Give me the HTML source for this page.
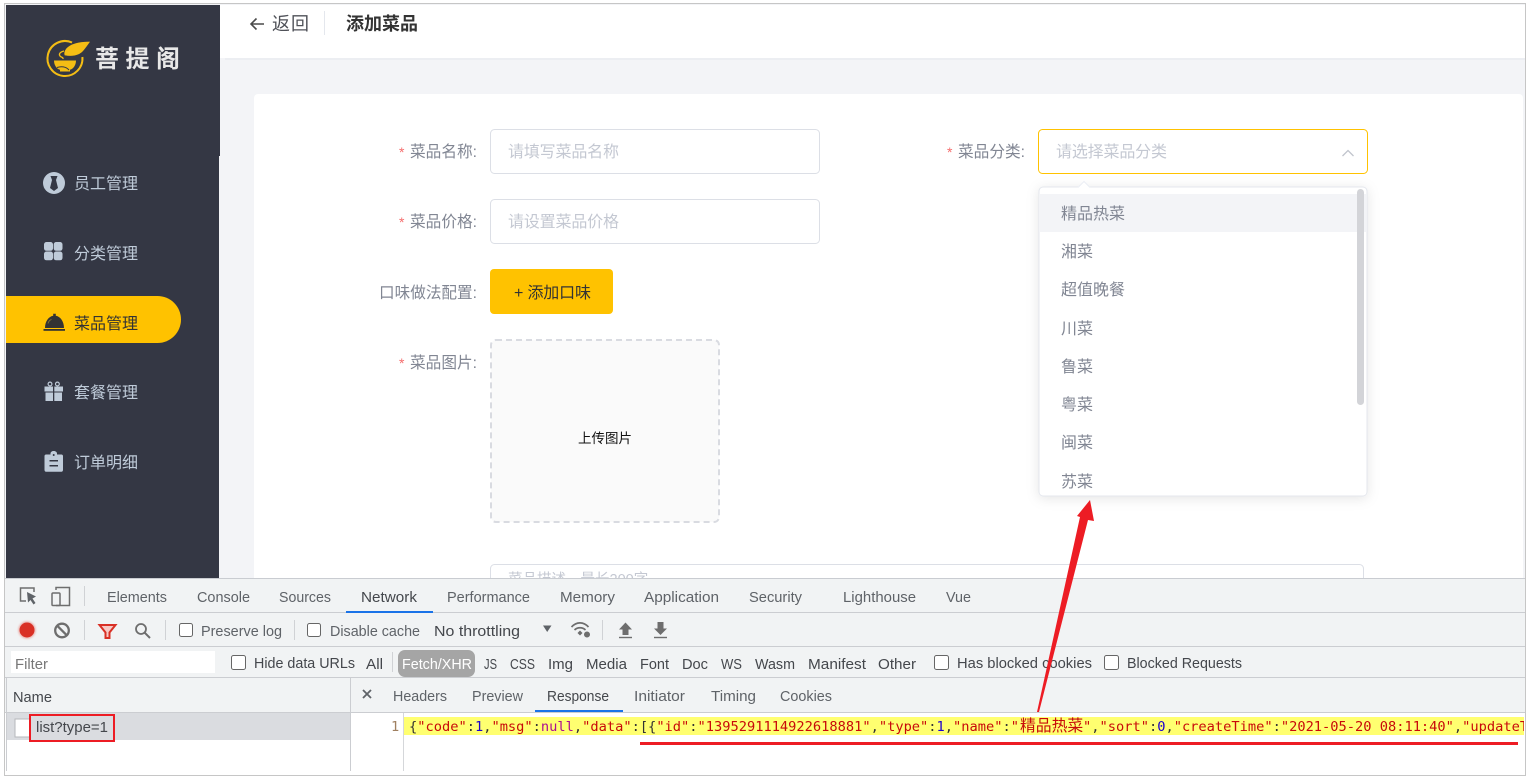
<!DOCTYPE html>
<html><head><meta charset="utf-8"><style>
html,body{margin:0;padding:0;background:#fff;width:1531px;height:782px;overflow:hidden}
svg{display:block}
text{font-family:"Liberation Sans","Noto Sans CJK SC",sans-serif;white-space:pre}
.cn{font-size:16px;fill:#818693}
.m{font-size:16px;fill:#bfcbd9}
.dt{font-size:14.5px;fill:#5f6368}
.dk{font-size:14.5px;fill:#44474c}
.code{font-family:"DejaVu Sans Mono","Liberation Mono",monospace;font-size:13.7px}
.r{fill:#c80a0a}.p{fill:#333}.b{fill:#1c00cf}.n{fill:#aa0d91}
</style></head><body>
<svg width="1531" height="782" viewBox="0 0 1531 782" xmlns="http://www.w3.org/2000/svg">
<defs>
<clipPath id="cc"><rect x="404" y="713" width="1120" height="40"/></clipPath>
<filter id="sh" x="-10%" y="-10%" width="120%" height="120%"><feDropShadow dx="0" dy="2" stdDeviation="6" flood-color="#000" flood-opacity=".1"/></filter>
<filter id="gl" x="-50%" y="-50%" width="200%" height="200%"><feGaussianBlur stdDeviation="1"/></filter>
</defs>
<rect x="4.5" y="3.5" width="1521" height="772" fill="#f3f4f7" stroke="#c6c6c6"/>
<!-- header -->
<rect x="220" y="5" width="1305" height="53" fill="#fff"/>
<rect x="225" y="58" width="1300" height="2" fill="#eceef2"/>
<path d="M264 24H251M256.500 18.500L251 24L256.500 29.500" fill="none" stroke="#4a4a4a" stroke-width="1.600"/>
<text x="272" y="30" font-size="18" fill="#4f5158" textLength="37">返回</text>
<rect x="324" y="11" width="1" height="24" fill="#e4e7ed"/>
<text x="346" y="30" font-size="18" font-weight="700" fill="#333">添加菜品</text>
<!-- card -->
<rect x="254" y="94" width="1269" height="490" rx="4" fill="#fff"/>
<!-- form -->
<text x="399" y="157" font-size="14" fill="#f56c6c">*</text>
<text x="410" y="157" class="cn" textLength="67" lengthAdjust="spacingAndGlyphs">菜品名称:</text>
<rect x="490.500" y="129.500" width="329" height="44" rx="4" fill="#fff" stroke="#dcdfe6"/>
<text x="508" y="157" font-size="16" fill="#c4c8d2" textLength="111">请填写菜品名称</text>
<text x="399" y="227" font-size="14" fill="#f56c6c">*</text>
<text x="410" y="227" class="cn" textLength="67" lengthAdjust="spacingAndGlyphs">菜品价格:</text>
<rect x="490.500" y="199.500" width="329" height="44" rx="4" fill="#fff" stroke="#dcdfe6"/>
<text x="508" y="227" font-size="16" fill="#c4c8d2" textLength="111">请设置菜品价格</text>
<text x="379" y="298" class="cn" textLength="98" lengthAdjust="spacingAndGlyphs">口味做法配置:</text>
<rect x="490" y="269" width="123" height="45" rx="4" fill="#ffc200"/>
<text x="514" y="298" font-size="16" fill="#333" textLength="77">+ 添加口味</text>
<text x="399" y="368" font-size="14" fill="#f56c6c">*</text>
<text x="410" y="368" class="cn" textLength="67" lengthAdjust="spacingAndGlyphs">菜品图片:</text>
<rect x="491" y="340" width="228" height="182" rx="5" fill="#fafafa" stroke="#d9dbe1" stroke-width="2" stroke-dasharray="6 4"/>
<text x="578" y="443" font-size="13.500" fill="#111">上传图片</text>
<rect x="490.500" y="564.500" width="873" height="40" rx="4" fill="#fff" stroke="#dcdfe6"/>
<text x="508" y="584" font-size="14.500" fill="#c4c8d2">菜品描述，最长200字</text>
<!-- select -->
<text x="947" y="157" font-size="14" fill="#f56c6c">*</text>
<text x="958" y="157" class="cn" textLength="67" lengthAdjust="spacingAndGlyphs">菜品分类:</text>
<rect x="1038.500" y="129.500" width="329" height="44" rx="4" fill="#fff" stroke="#ffc200"/>
<text x="1056" y="157" font-size="16" fill="#c4c8d2" textLength="111">请选择菜品分类</text>
<path d="M1342.500 156L1348 150.500L1353.500 156" fill="none" stroke="#c0c4cc" stroke-width="1.300"/>
<!-- dropdown -->
<rect x="1039" y="187" width="328" height="309" rx="4" fill="#fff" stroke="#e4e7ed" filter="url(#sh)"/>
<path d="M1078 187.500L1084 181.500L1090 187.500" fill="#fff" stroke="#ebeef5"/>
<rect x="1039" y="194" width="327" height="38" fill="#f3f4f7"/>
<rect x="1357" y="189" width="7" height="216" rx="3.500" fill="#d3d4d8"/>
<text x="1061" y="219" class="cn">精品热菜</text>
<text x="1061" y="257" class="cn">湘菜</text>
<text x="1061" y="295" class="cn">超值晚餐</text>
<text x="1061" y="334" class="cn">川菜</text>
<text x="1061" y="372" class="cn">鲁菜</text>
<text x="1061" y="410" class="cn">粤菜</text>
<text x="1061" y="448" class="cn">闽菜</text>
<text x="1061" y="487" class="cn">苏菜</text>
<!-- sidebar -->
<rect x="6" y="5" width="214" height="151" fill="#343744"/>
<rect x="6" y="156" width="213" height="422" fill="#343744"/>
<!-- logo -->
<path d="M72 42.500A17.500 17.500 0 1 0 82.400 57" fill="none" stroke="#f4bd14" stroke-width="2"/>
<path d="M90.500 41.500C80 41 70 43.500 66 48.500C64 51 63.500 54 64.500 55.500C71 57 79 56 83 51.500C86 48 88 45 90.500 41.500Z" fill="#f4bd14" stroke="#343744" stroke-width=".6"/>
<path d="M64 51C60 52 58.500 54 60 56C61 57.500 63.500 57 63 59" fill="none" stroke="#f4bd14" stroke-width="1.300"/>
<path d="M54 60.500H76C76 65.500 73 69 70 69.800V71.500H60V69.800C57 69 54 65.500 54 60.500Z" fill="#f4bd14"/>
<path d="M57 67.500C61 66 66 66.500 69 70" fill="none" stroke="#343744" stroke-width="1"/>
<text x="95" y="67" font-size="24" font-weight="700" fill="#e8e8e8" letter-spacing="6.500" style="font-family:'Noto Sans CJK SC',sans-serif">菩提阁</text>
<!-- menu icons -->
<circle cx="54" cy="183" r="11" fill="#bfcbd9"/>
<path d="M50.500 176H57.500L56 180L58 188L54 191L50 188L52 180Z" fill="#343744"/>
<rect x="44" y="242" width="9" height="8.800" rx="2.500" fill="#bfcbd9"/><rect x="53.700" y="242" width="8.800" height="8.800" rx="2.500" fill="#bfcbd9"/>
<rect x="44" y="251.500" width="9" height="8.800" rx="2.500" fill="#bfcbd9"/><rect x="53.700" y="251.500" width="8.800" height="8.800" rx="2.500" fill="#bfcbd9"/>
<path d="M6 296H157.500A23.500 23.500 0 0 1 157.500 343H6Z" fill="#ffc200"/>
<path d="M45 328C45 321 49 316.300 53.200 315.700V313.700H55.800V315.700C60 316.300 64 321 64 328Z" fill="#333"/>
<rect x="43.500" y="329" width="21.500" height="1.800" fill="#333"/>
<path d="M48 323.500C48.500 321.500 50 320 51.500 319.500" fill="none" stroke="#8a7a3a" stroke-width=".8"/>
<rect x="44.500" y="386.500" width="18.500" height="5" fill="#bfcbd9"/>
<rect x="45.500" y="392.500" width="16.500" height="8.500" fill="#bfcbd9"/>
<rect x="53" y="386" width="1.300" height="16" fill="#343744"/>
<circle cx="50" cy="384" r="1.900" fill="none" stroke="#bfcbd9" stroke-width="1.200"/><circle cx="57.400" cy="384" r="1.900" fill="none" stroke="#bfcbd9" stroke-width="1.200"/>
<path d="M46 454.500H50.500V453.500C50.500 452 52 451 53.700 451C55.400 451 57 452 57 453.500V454.500H61.500C62.300 454.500 63 455.200 63 456V470C63 471 62.300 471.700 61.500 471.700H46C45.200 471.700 44.500 471 44.500 470V456C44.500 455.200 45.200 454.500 46 454.500Z" fill="#bfcbd9"/>
<rect x="49.500" y="460" width="8.500" height="1.500" fill="#343744"/><rect x="49.500" y="465" width="8.500" height="1.500" fill="#343744"/>
<circle cx="53.700" cy="455" r="1" fill="#343744"/>
<text x="74" y="189" class="m">员工管理</text>
<text x="74" y="259" class="m">分类管理</text>
<text x="74" y="329" class="m" style="fill:#333">菜品管理</text>
<text x="74" y="398" class="m">套餐管理</text>
<text x="74" y="468" class="m">订单明细</text>
<!-- devtools -->
<rect x="5" y="578" width="1520" height="135" fill="#f1f3f4"/>
<rect x="5" y="578" width="1520" height="1" fill="#c9ccd1"/>
<rect x="5" y="612" width="1520" height="1" fill="#cbcdd1"/>
<rect x="5" y="646" width="1520" height="1" fill="#cbcdd1"/>
<rect x="5" y="677" width="1520" height="1" fill="#cbcdd1"/>
<rect x="5" y="712" width="1520" height="1" fill="#cbcdd1"/>
<rect x="5" y="713" width="1520" height="62" fill="#fff"/>
<rect x="6" y="713" width="344" height="27" fill="#dadce0"/>
<rect x="6" y="678" width="1" height="93" fill="#cbcdd1"/>
<rect x="350" y="678" width="1" height="93" fill="#cbcdd1"/>
<rect x="403" y="713" width="1" height="58" fill="#d5d7da"/>
<rect x="4" y="775" width="1522" height="1" fill="#c6c6c6"/>
<rect x="346" y="611" width="87" height="2" fill="#1a73e8"/>
<rect x="535" y="710" width="88" height="2" fill="#1a73e8"/>
<!-- devtool icons -->
<path d="M26 601H20.500V588H34V592" fill="none" stroke="#6e6e6e" stroke-width="1.500"/>
<path d="M27 592L36 596.500L32.500 598.500L35.500 603L33.500 604.500L30.500 600L28 602.500Z" fill="#5f6368"/>
<path d="M56 590V587.500H69.500V605.500H56" fill="none" stroke="#6e6e6e" stroke-width="1.500"/>
<rect x="52" y="593" width="8" height="12.500" rx="1" fill="none" stroke="#6e6e6e" stroke-width="1.500"/>
<rect x="84" y="586" width="1" height="20" fill="#d0d2d5"/>
<circle cx="27" cy="630" r="8.500" fill="#eaa5a0" filter="url(#gl)"/>
<circle cx="27" cy="630" r="7.500" fill="#d93025"/>
<circle cx="62" cy="630.500" r="6.800" fill="none" stroke="#6e6e6e" stroke-width="2.300"/>
<path d="M57.300 625.800L66.800 635.300" stroke="#6e6e6e" stroke-width="2.300"/>
<rect x="84" y="620" width="1" height="20" fill="#d0d2d5"/>
<path d="M99.500 625H115.500L109.500 632.500V638H105.500V632.500Z" fill="#f7c9c5" stroke="#d93025" stroke-width="2"/>
<circle cx="141" cy="629" r="5" fill="none" stroke="#6e6e6e" stroke-width="1.800"/>
<path d="M144.500 632.500L150 638" stroke="#6e6e6e" stroke-width="2"/>
<rect x="165" y="620" width="1" height="20" fill="#d0d2d5"/>
<rect x="294" y="620" width="1" height="20" fill="#d0d2d5"/>
<rect x="179.500" y="623.500" width="13" height="13" rx="2" fill="#fff" stroke="#666"/>
<text x="201" y="636" class="dt" textLength="81" lengthAdjust="spacingAndGlyphs">Preserve log</text>
<rect x="307.500" y="623.500" width="13" height="13" rx="2" fill="#fff" stroke="#666"/>
<text x="330" y="636" class="dt" textLength="90" lengthAdjust="spacingAndGlyphs">Disable cache</text>
<text x="434" y="636" class="dk" textLength="86" lengthAdjust="spacingAndGlyphs">No throttling</text>
<path d="M543 625.500H551.500L547.200 632Z" fill="#5f6368"/>
<path d="M571.500 627C576.500 621.500 583.500 621.500 588.500 627M574.500 630C577.500 627 582.500 627 585.500 630" fill="none" stroke="#6e6e6e" stroke-width="1.700"/>
<path d="M577.500 633L580 630.500L582.500 633L580 635.500Z" fill="#6e6e6e"/>
<circle cx="587" cy="634.500" r="2.500" fill="#6e6e6e" stroke="#6e6e6e" stroke-width="1"/>
<rect x="602" y="620" width="1" height="20" fill="#d0d2d5"/>
<path d="M625.500 622.500L632 629.500H628.500V635H622.500V629.500H619Z" fill="#6e6e6e"/><rect x="619" y="636.800" width="13" height="1.400" fill="#6e6e6e"/>
<path d="M657.500 622H663.500V628.500H667L660.500 635L654 628.500H657.500Z" fill="#6e6e6e"/><rect x="654" y="636.800" width="13" height="1.400" fill="#6e6e6e"/>
<!-- tabs -->
<text x="107" y="602" class="dt" textLength="60" lengthAdjust="spacingAndGlyphs">Elements</text>
<text x="197" y="602" class="dt" textLength="53" lengthAdjust="spacingAndGlyphs">Console</text>
<text x="279" y="602" class="dt" textLength="52" lengthAdjust="spacingAndGlyphs">Sources</text>
<text x="361" y="602" class="dk" textLength="56" lengthAdjust="spacingAndGlyphs">Network</text>
<text x="447" y="602" class="dt" textLength="83" lengthAdjust="spacingAndGlyphs">Performance</text>
<text x="560" y="602" class="dt" textLength="55" lengthAdjust="spacingAndGlyphs">Memory</text>
<text x="644" y="602" class="dt" textLength="75" lengthAdjust="spacingAndGlyphs">Application</text>
<text x="749" y="602" class="dt" textLength="53" lengthAdjust="spacingAndGlyphs">Security</text>
<text x="843" y="602" class="dt" textLength="73" lengthAdjust="spacingAndGlyphs">Lighthouse</text>
<text x="946" y="602" class="dt" textLength="25" lengthAdjust="spacingAndGlyphs">Vue</text>
<!-- filter row -->
<rect x="11" y="651" width="204" height="22" fill="#fff"/>
<text x="15" y="669" class="dt" style="fill:#777" textLength="33" lengthAdjust="spacingAndGlyphs">Filter</text>
<rect x="231.500" y="655.500" width="14" height="14" rx="2" fill="#fff" stroke="#666"/>
<text x="254" y="668" class="dk" textLength="101" lengthAdjust="spacingAndGlyphs">Hide data URLs</text>
<text x="366" y="669" class="dk" textLength="17" lengthAdjust="spacingAndGlyphs">All</text>
<rect x="392" y="652" width="1" height="20" fill="#d0d2d5"/>
<rect x="398" y="650" width="77" height="27" rx="7" fill="#a5a5a5"/>
<text x="402" y="669" class="dk" style="fill:#fff" textLength="70" lengthAdjust="spacingAndGlyphs">Fetch/XHR</text>
<text x="484" y="669" class="dk" textLength="13" lengthAdjust="spacingAndGlyphs">JS</text>
<text x="510" y="669" class="dk" textLength="25" lengthAdjust="spacingAndGlyphs">CSS</text>
<text x="548" y="669" class="dk" textLength="25" lengthAdjust="spacingAndGlyphs">Img</text>
<text x="586" y="669" class="dk" textLength="41" lengthAdjust="spacingAndGlyphs">Media</text>
<text x="640" y="669" class="dk" textLength="29" lengthAdjust="spacingAndGlyphs">Font</text>
<text x="682" y="669" class="dk" textLength="26" lengthAdjust="spacingAndGlyphs">Doc</text>
<text x="721" y="669" class="dk" textLength="21" lengthAdjust="spacingAndGlyphs">WS</text>
<text x="755" y="669" class="dk" textLength="40" lengthAdjust="spacingAndGlyphs">Wasm</text>
<text x="808" y="669" class="dk" textLength="58" lengthAdjust="spacingAndGlyphs">Manifest</text>
<text x="878" y="669" class="dk" textLength="38" lengthAdjust="spacingAndGlyphs">Other</text>
<rect x="934.500" y="655.500" width="14" height="14" rx="2" fill="#fff" stroke="#666"/>
<text x="957" y="668" class="dk" textLength="135" lengthAdjust="spacingAndGlyphs">Has blocked cookies</text>
<rect x="1104.500" y="655.500" width="14" height="14" rx="2" fill="#fff" stroke="#666"/>
<text x="1127" y="668" class="dk" textLength="115" lengthAdjust="spacingAndGlyphs">Blocked Requests</text>
<!-- name row -->
<text x="13" y="702" class="dk" textLength="39" lengthAdjust="spacingAndGlyphs">Name</text>
<path d="M363 690L371 698M371 690L363 698" stroke="#5f6368" stroke-width="1.800"/>
<text x="393" y="701" class="dt" textLength="54" lengthAdjust="spacingAndGlyphs">Headers</text>
<text x="472" y="701" class="dt" textLength="51" lengthAdjust="spacingAndGlyphs">Preview</text>
<text x="547" y="701" class="dk" textLength="62" lengthAdjust="spacingAndGlyphs">Response</text>
<text x="634" y="701" class="dt" textLength="51" lengthAdjust="spacingAndGlyphs">Initiator</text>
<text x="711" y="701" class="dt" textLength="45" lengthAdjust="spacingAndGlyphs">Timing</text>
<text x="780" y="701" class="dt" textLength="52" lengthAdjust="spacingAndGlyphs">Cookies</text>
<rect x="15" y="719" width="15" height="18" fill="#fff" stroke="#b5b7bb"/>
<text x="36" y="732" class="dk" textLength="72" lengthAdjust="spacingAndGlyphs">list?type=1</text>
<rect x="30" y="715" width="84" height="26" fill="none" stroke="#ed1c24" stroke-width="2"/>
<!-- code -->
<text x="391" y="731" font-size="13.500" class="code" fill="#a08060">1</text>
<rect x="404" y="717" width="1120" height="18" fill="#ffff70"/>
<g clip-path="url(#cc)">
<text x="409" y="731" class="code"><tspan class="p">{</tspan><tspan class="r">"code"</tspan><tspan class="p">:</tspan><tspan class="b">1</tspan><tspan class="p">,</tspan><tspan class="r">"msg"</tspan><tspan class="p">:</tspan><tspan class="n">null</tspan><tspan class="p">,</tspan><tspan class="r">"data"</tspan><tspan class="p">:[{</tspan><tspan class="r">"id"</tspan><tspan class="p">:</tspan><tspan class="r">"1395291114922618881"</tspan><tspan class="p">,</tspan><tspan class="r">"type"</tspan><tspan class="p">:</tspan><tspan class="b">1</tspan><tspan class="p">,</tspan><tspan class="r">"name"</tspan><tspan class="p">:</tspan><tspan class="r">"</tspan></text>
<text x="1020" y="731" font-size="15.800" fill="#c80a0a">精品热菜</text>
<text x="1083" y="731" class="code"><tspan class="r">"</tspan><tspan class="p">,</tspan><tspan class="r">"sort"</tspan><tspan class="p">:</tspan><tspan class="b">0</tspan><tspan class="p">,</tspan><tspan class="r">"createTime"</tspan><tspan class="p">:</tspan><tspan class="r">"2021-05-20 08:11:40"</tspan><tspan class="p">,</tspan><tspan class="r">"updateTime"</tspan></text>
</g>
<!-- annotations -->
<rect x="640" y="742" width="878" height="3" fill="#ed1c24"/>
<polygon points="1037,712 1039,712 1088,520 1094,521 1090,500 1077,516 1080,517" fill="#ed1c24"/>
</svg>
</body></html>
